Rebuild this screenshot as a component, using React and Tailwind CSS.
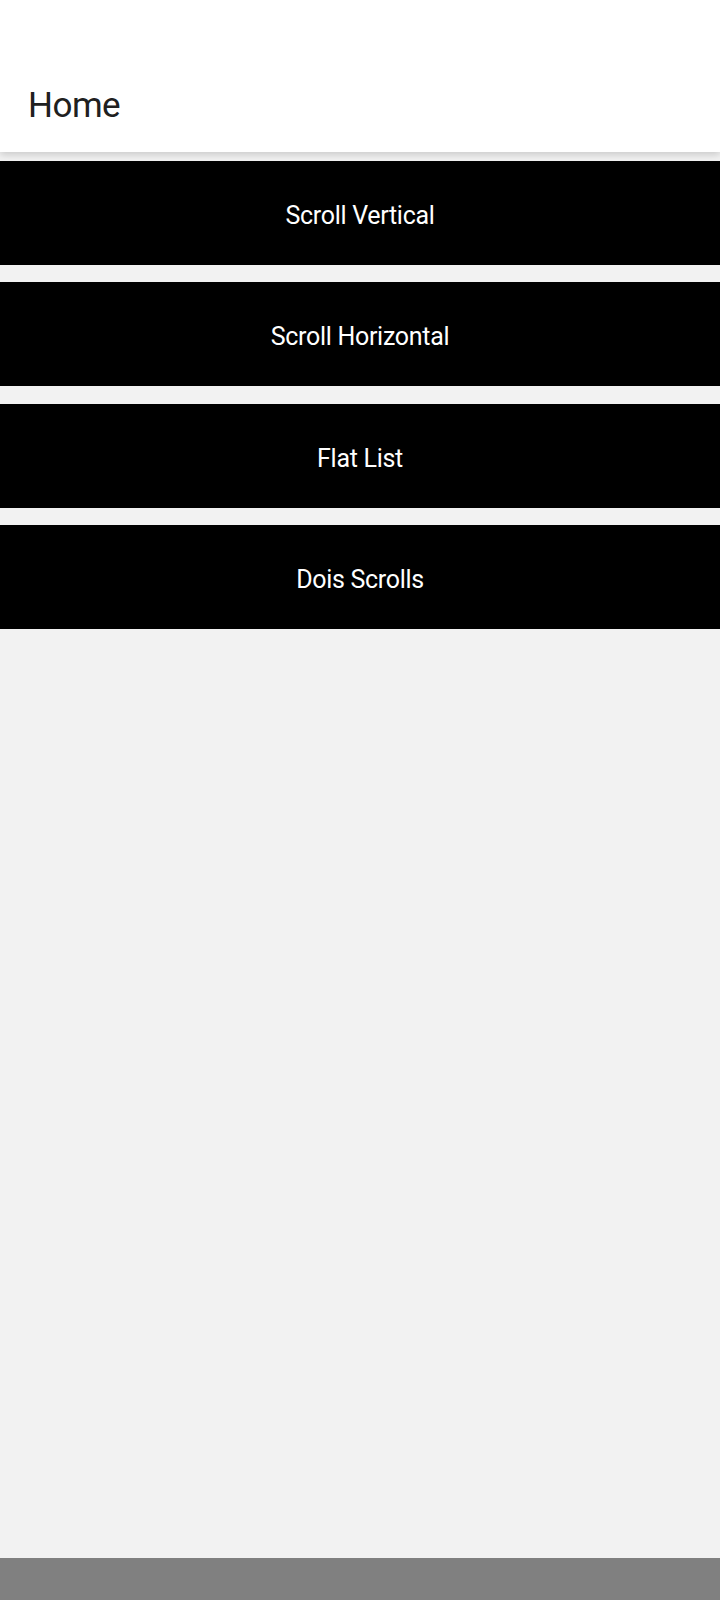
import React from "react";

const routes = ["Scroll Vertical", "Scroll Horizontal", "Flat List", "Dois Scrolls"];

export default function App() {
  return (
    <div className="flex h-[1600px] flex-col bg-[#f2f2f2] font-['Roboto',sans-serif]">
      {/* header */}
      <header className="relative z-10 h-[152px] bg-white pl-[28px] pt-[85px] shadow-[0_3px_7px_rgba(0,0,0,0.16)]">
        <h1 className="text-[35px] leading-[41px] tracking-[-0.5px] text-[#202020]">Home</h1>
      </header>

      {/* menu */}
      <main className="flex flex-1 flex-col gap-[17.4px] pt-[9px]">
        {routes.map((r) => (
          <button
            key={r}
            className="flex h-[104px] w-full items-center justify-center bg-black pt-[5px] text-[25px] tracking-[-0.3px] text-white"
          >
            {r}
          </button>
        ))}
      </main>

      {/* nav bar */}
      <div className="h-[42px] bg-[#808080]" />
    </div>
  );
}
